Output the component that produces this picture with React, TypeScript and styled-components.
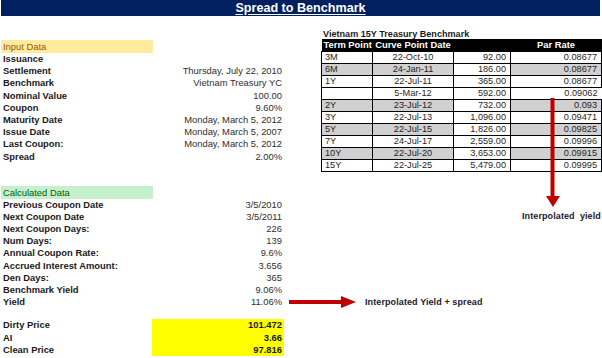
import React from 'react';
import styled, { createGlobalStyle } from 'styled-components';

const GlobalStyle = createGlobalStyle`
  html, body {
    margin: 0;
    padding: 0;
    background: #ffffff;
  }
  body {
    font-family: "Liberation Sans", Arial, sans-serif;
    color: #1f1f1f;
  }
`;

const ROW_H = 12.2;

const Page = styled.div`
  position: relative;
  width: 602px;
  height: 358px;
  overflow: hidden;
  background: #ffffff;
`;

const TitleBar = styled.div`
  height: 16px;
  margin: 0 2px 0 1px;
  background: #002060;
  color: #ffffff;
  font-weight: 700;
  font-size: 12.6px;
  line-height: 16px;
  text-align: center;
  text-decoration: underline;
  text-underline-offset: 2px;
`;

const Body = styled.div`
  display: flex;
  align-items: flex-start;
`;

const LeftPanel = styled.div`
  width: 283px;
  margin-left: 1px;
  padding-top: 24px;
`;

const SectionBand = styled.div<{ $tone: 'neutral' | 'good'; $gap?: number }>`
  width: 152px;
  height: 13px;
  margin-top: ${(p) => p.$gap ?? 0}px;
  padding-left: 2px;
  box-sizing: border-box;
  font-size: 9.4px;
  line-height: 13px;
  background: ${(p) => (p.$tone === 'neutral' ? '#ffeb9c' : '#c6efce')};
  color: ${(p) => (p.$tone === 'neutral' ? '#9c5700' : '#006100')};
`;

const DataRow = styled.div`
  display: grid;
  grid-template-columns: 151px 1fr;
  height: ${ROW_H}px;
  line-height: ${ROW_H}px;
  font-size: 9.4px;
`;

const Label = styled.span`
  padding-left: 2px;
  font-weight: 700;
  color: #1a1a1a;
  white-space: nowrap;
`;

const Value = styled.span<{ $highlight?: boolean }>`
  padding-right: 2px;
  text-align: right;
  white-space: nowrap;
  color: ${(p) => (p.$highlight ? '#1a1a1a' : '#2e2e2e')};
  font-weight: ${(p) => (p.$highlight ? 700 : 400)};
  background: ${(p) => (p.$highlight ? '#ffff00' : 'transparent')};
`;

const PriceBlock = styled.div`
  margin-top: 11px;
`;

const RightPanel = styled.div`
  margin-left: 37px;
  width: 281px;
  padding-top: 12px;
`;

const TableTitle = styled.div`
  height: 11px;
  line-height: 12px;
  padding-left: 2px;
  font-size: 9.1px;
  font-weight: 700;
  color: #1a1a1a;
`;

const CurveTable = styled.table`
  border-collapse: collapse;
  table-layout: fixed;
  width: 280px;
  font-size: 9.2px;
  color: #1f1f1f;
`;

const HeadCell = styled.th<{ $align: 'left' | 'center' }>`
  height: 12px;
  padding: 0 2px;
  background: #000000;
  color: #ffffff;
  font-size: 9.4px;
  font-weight: 700;
  text-align: ${(p) => p.$align};
  white-space: nowrap;
  line-height: 12px;
`;

const Cell = styled.td<{ $align: 'left' | 'center' | 'right'; $shade?: boolean; $bare?: boolean }>`
  height: 11px;
  padding: 0 ${(p) => (p.$align === 'right' ? 4 : 2)}px 0 ${(p) => (p.$align === 'left' ? 3 : 2)}px;
  line-height: 11px;
  text-align: ${(p) => p.$align};
  white-space: nowrap;
  border: ${(p) => (p.$bare ? 'none' : '1px solid #000')};
  background: ${(p) => (p.$shade ? '#d0d0d0' : '#ffffff')};
`;

const Callout = styled.div<{ $x: number; $y: number }>`
  position: absolute;
  left: ${(p) => p.$x}px;
  top: ${(p) => p.$y}px;
  display: flex;
  align-items: center;
`;

const CalloutText = styled.span`
  font-size: 9px;
  font-weight: 700;
  color: #1a1a2e;
  white-space: nowrap;
  letter-spacing: 0.1px;
`;

const inputRows: [string, string][] = [
  ['Issuance', ''],
  ['Settlement', 'Thursday, July 22, 2010'],
  ['Benchmark', 'Vietnam Treasury YC'],
  ['Nominal Value', '100.00'],
  ['Coupon', '9.60%'],
  ['Maturity Date', 'Monday, March 5, 2012'],
  ['Issue Date', 'Monday, March 5, 2007'],
  ['Last Coupon:', 'Monday, March 5, 2012'],
  ['Spread', '2.00%'],
];

const calcRows: [string, string][] = [
  ['Previous Coupon Date', '3/5/2010'],
  ['Next Coupon Date', '3/5/2011'],
  ['Next Coupon Days:', '226'],
  ['Num Days:', '139'],
  ['Annual Coupon Rate:', '9.6%'],
  ['Accrued Interest Amount:', '3.656'],
  ['Den Days:', '365'],
  ['Benchmark Yield', '9.06%'],
  ['Yield', '11.06%'],
];

const priceRows: [string, string][] = [
  ['Dirty Price', '101.472'],
  ['AI', '3.66'],
  ['Clean Price', '97.816'],
];

interface CurvePoint {
  term: string;
  date: string;
  days: string;
  rate: string;
  shade?: boolean;
  interpolated?: boolean;
}

const curve: CurvePoint[] = [
  { term: '3M', date: '22-Oct-10', days: '92.00', rate: '0.08677' },
  { term: '6M', date: '24-Jan-11', days: '186.00', rate: '0.08677', shade: true },
  { term: '1Y', date: '22-Jul-11', days: '365.00', rate: '0.08677' },
  { term: '', date: '5-Mar-12', days: '592.00', rate: '0.09062', interpolated: true },
  { term: '2Y', date: '23-Jul-12', days: '732.00', rate: '0.093', shade: true },
  { term: '3Y', date: '22-Jul-13', days: '1,096.00', rate: '0.09471' },
  { term: '5Y', date: '22-Jul-15', days: '1,826.00', rate: '0.09825', shade: true },
  { term: '7Y', date: '24-Jul-17', days: '2,559.00', rate: '0.09996' },
  { term: '10Y', date: '22-Jul-20', days: '3,653.00', rate: '0.09915', shade: true },
  { term: '15Y', date: '22-Jul-25', days: '5,479.00', rate: '0.09995' },
];

const RightArrow = () => (
  <svg width="67" height="12" viewBox="0 0 67 12">
    <rect x="0" y="4" width="54" height="4" fill="#c00000" />
    <polygon points="52,0 67,6 52,12" fill="#c00000" />
  </svg>
);

const DownArrow = () => (
  <svg width="14" height="109" viewBox="0 0 14 109">
    <rect x="4.5" y="0" width="4" height="100" fill="#c00000" />
    <polygon points="0,98 14,98 7,109" fill="#c00000" />
  </svg>
);

export default function App() {
  return (
    <>
      <GlobalStyle />
      <Page>
        <TitleBar>Spread to Benchmark</TitleBar>
        <Body>
          <LeftPanel>
            <SectionBand $tone="neutral">Input Data</SectionBand>
            {inputRows.map(([label, value]) => (
              <DataRow key={label}>
                <Label>{label}</Label>
                <Value>{value}</Value>
              </DataRow>
            ))}

            <SectionBand $tone="good" $gap={23}>
              Calculated Data
            </SectionBand>
            {calcRows.map(([label, value]) => (
              <DataRow key={label}>
                <Label>{label}</Label>
                <Value>{value}</Value>
              </DataRow>
            ))}

            <PriceBlock>
              {priceRows.map(([label, value]) => (
                <DataRow key={label}>
                  <Label>{label}</Label>
                  <Value $highlight>{value}</Value>
                </DataRow>
              ))}
            </PriceBlock>
          </LeftPanel>

          <RightPanel>
            <TableTitle>Vietnam 15Y Treasury Benchmark</TableTitle>
            <CurveTable>
              <colgroup>
                <col style={{ width: 51 }} />
                <col style={{ width: 81 }} />
                <col style={{ width: 57 }} />
                <col style={{ width: 91 }} />
              </colgroup>
              <thead>
                <tr>
                  <HeadCell $align="left">Term Point</HeadCell>
                  <HeadCell $align="center">Curve Point Date</HeadCell>
                  <HeadCell $align="center"></HeadCell>
                  <HeadCell $align="center">Par Rate</HeadCell>
                </tr>
              </thead>
              <tbody>
                {curve.map((pt) => (
                  <tr key={pt.date}>
                    <Cell $align="left" $shade={pt.shade}>
                      {pt.term}
                    </Cell>
                    <Cell $align="center" $shade={pt.shade}>
                      {pt.date}
                    </Cell>
                    <Cell $align="right">{pt.days}</Cell>
                    <Cell $align="right" $shade={pt.shade} $bare={pt.interpolated}>
                      {pt.rate}
                    </Cell>
                  </tr>
                ))}
              </tbody>
            </CurveTable>
          </RightPanel>
        </Body>

        <Callout $x={289} $y={296}>
          <RightArrow />
          <CalloutText style={{ marginLeft: 9 }}>Interpolated Yield + spread</CalloutText>
        </Callout>

        <Callout $x={546} $y={98}>
          <DownArrow />
        </Callout>
        <Callout $x={522} $y={211}>
          <CalloutText>Interpolated&nbsp; yield</CalloutText>
        </Callout>
      </Page>
    </>
  );
}
